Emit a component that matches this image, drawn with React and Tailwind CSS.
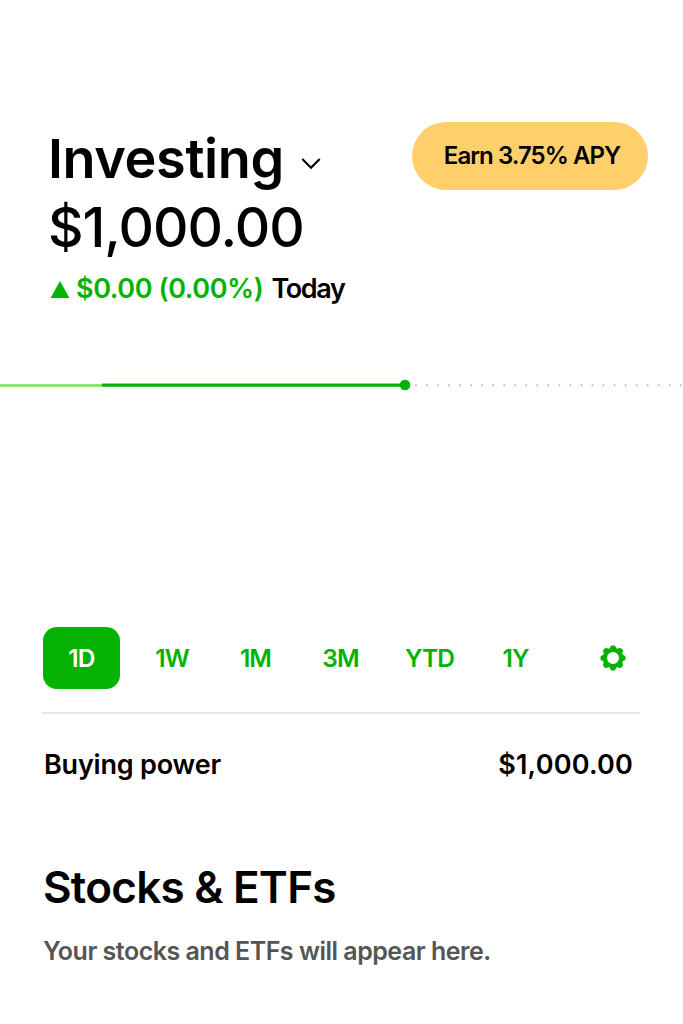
import React, { useState } from "react";

const ranges = [
  { label: "1D", style: "w-[77px]" },
  { label: "1W", style: "w-[104px]" },
  { label: "1M", style: "w-[63px]" },
  { label: "3M", style: "w-[107px]" },
  { label: "YTD", style: "w-[71px]" },
  { label: "1Y", style: "w-[101px]" },
];

const GearIcon = () => (
  <svg width="26" height="26" viewBox="-13 -13 26 26">
    <circle r="8.1" fill="none" stroke="#03b203" strokeWidth="4.2" />
    {[0, 45, 90, 135, 180, 225, 270, 315].map((deg) => (
      <path
        key={deg}
        d="M-3.6 -9 L-2.3 -11.8 Q-2 -12.5 -1.3 -12.5 H1.3 Q2 -12.5 2.3 -11.8 L3.6 -9 Z"
        fill="#03b203"
        transform={`rotate(${deg})`}
      />
    ))}
  </svg>
);

const Chart = () => (
  <svg className="block" width="683" height="20" viewBox="0 0 683 20">
    <path d="M0 10.5H102" stroke="#8be37a" strokeWidth="3" />
    <path d="M102 10.2H405" stroke="#03b203" strokeWidth="3.2" />
    <circle cx="405" cy="10" r="5.3" fill="#03b203" />
    <path
      d="M416 10.3H683"
      stroke="#b8b8b8"
      strokeWidth="2.1"
      strokeLinecap="round"
      strokeDasharray="0 11.03"
    />
  </svg>
);

const App = () => {
  const [range, setRange] = useState("1D");

  return (
    <div className="h-[1024px] w-[683px] overflow-hidden bg-white pt-[121px] font-[Inter,sans-serif] whitespace-nowrap text-black">
      <header className="flex h-[200px] justify-between pr-[35px] pl-[48px]">
        <div className="flex flex-col">
          <div className="flex h-[75px] items-center gap-[17px]">
            <h1 className="text-[54px] font-semibold tracking-[-0.4px]">Investing</h1>
            <svg className="mt-2.5" width="20" height="12" viewBox="0 0 20 12">
              <path
                d="M1.8 1.5L10 9.8L18.2 1.5"
                fill="none"
                stroke="#000"
                strokeWidth="2.1"
                strokeLinecap="round"
              />
            </svg>
          </div>
          <p className="h-[61px] text-[55px] leading-[63px] font-medium tracking-[-1px]">
            $1,000.00
          </p>
          <div className="flex h-[64px] items-center pl-0.5 text-[27px]">
            <svg width="20" height="17" viewBox="0 0 20 17">
              <path d="M10 0L19.5 17H0.5Z" fill="#03b203" />
            </svg>
            <span className="ml-1.5 font-semibold tracking-[-0.4px] text-[#03b203]">
              $0.00 (0.00%)
            </span>
            <span className="ml-2 font-semibold tracking-[-1.4px]">Today</span>
          </div>
        </div>
        <button className="mt-px h-[68px] w-[236px] rounded-full bg-[#ffcf6b] pl-1 text-[24px] font-semibold tracking-[-0.95px]">
          Earn 3.75% APY
        </button>
      </header>

      <div className="mt-[54px] h-[252px]">
        <Chart />
      </div>

      <main className="pr-[43px] pl-[43px]">
        <div className="flex h-[87px] items-start border-b-2 border-[#e6e6e6]">
          {ranges.map((r) => (
            <button
              key={r.label}
              onClick={() => setRange(r.label)}
              className={`${r.style} h-[62px] shrink-0 rounded-[14px] pt-px text-[24.5px] font-semibold tracking-[-0.9px] ${
                range === r.label ? "bg-[#03b203] text-white" : "text-[#03b203]"
              }`}
            >
              {r.label}
            </button>
          ))}
          <button className="ml-[34px] flex h-[61px] items-center">
            <GearIcon />
          </button>
        </div>

        <div className="flex h-[103px] items-center justify-between pr-[7px] pl-px text-[27px] font-semibold">
          <span className="tracking-[-0.2px]">Buying power</span>
          <span className="tracking-[0.2px]">$1,000.00</span>
        </div>

        <h2 className="mt-10 h-[60px] text-[44px] leading-[60px] font-semibold tracking-[-0.75px]">
          Stocks &amp; ETFs
        </h2>
        <p className="mt-[14px] text-[25px] leading-[40px] font-semibold tracking-[-0.5px] text-[#555]">
          Your stocks and ETFs will appear here.
        </p>
      </main>
    </div>
  );
};

export default App;
